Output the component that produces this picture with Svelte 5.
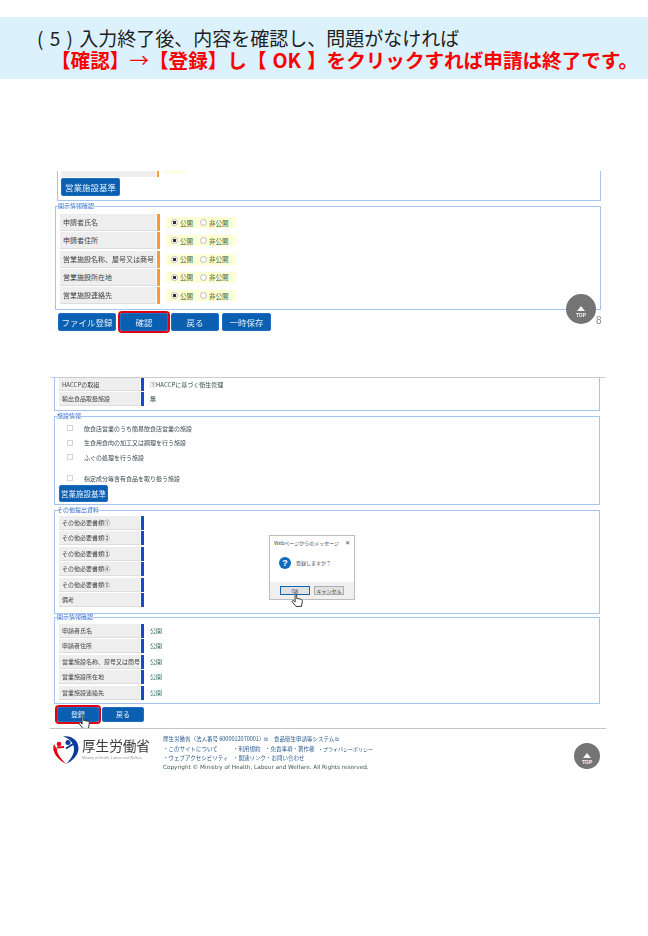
<script>
  const disclose = ["申請者氏名", "申請者住所", "営業施設名称、屋号又は商号", "営業施設所在地", "営業施設連絡先"];
  const others = ["その他必要書類①", "その他必要書類②", "その他必要書類③", "その他必要書類④", "その他必要書類⑤", "備考"];
  const facilities = [
    { text: "飲食店営業のうち簡易飲食店営業の施設", cls: "" },
    { text: "生食用食肉の加工又は調理を行う施設", cls: "" },
    { text: "ふぐの処理を行う施設", cls: "wide" },
    { text: "指定成分等含有食品を取り扱う施設", cls: "" }
  ];
  const handPath = "M5 1.500c1-.8 2 0 2 1V8l5 1c1.500.4 2 1 2 2.500L13 18H6L1.500 12.500c-.8-1.200.6-2.300 1.700-1.500L5 12.500z";
</script>

<div class="page">
  <header class="banner">
    <p class="line1">( 5 ) 入力終了後、内容を確認し、問題がなければ</p>
    <p class="line2">【確認】<span class="thin">→</span>【登録】し【 OK 】をクリックすれば申請は終了です。</p>
  </header>

  <section class="shot first">
    <div class="box top-box">
      <div class="stub"><span class="bar orange"></span><span class="tint"></span></div>
      <button class="btn big">営業施設基準</button>
    </div>
    <fieldset class="box open">
      <legend>開示情報確認</legend>
      {#each disclose as label}
        <div class="row">
          <span class="label">{label}</span>
          <span class="bar orange"></span>
          <span class="radios">
            <i class="radio on"></i><b>公開</b>
            <i class="radio"></i><b>非公開</b>
          </span>
        </div>
      {/each}
    </fieldset>
    <div class="actions">
      <button class="btn file">ファイル登録</button>
      <button class="btn confirm marked">確認</button>
      <button class="btn back">戻る</button>
      <button class="btn save">一時保存</button>
    </div>
    <div class="to-top main-top"><span class="arrow"></span><span>TOP</span></div>
    <span class="page-no">8</span>
  </section>

  <section class="shot second">
    <div class="box summary">
      <div class="row small"><span class="label">HACCPの取組</span><span class="bar blue"></span><span class="value">①HACCPに基づく衛生管理</span></div>
      <div class="row small"><span class="label">輸出食品取扱施設</span><span class="bar blue"></span><span class="value">無</span></div>
    </div>
    <fieldset class="box facilities">
      <legend>施設情報</legend>
      {#each facilities as f}
        <div class="check {f.cls}"><i></i><span>{f.text}</span></div>
      {/each}
      <button class="btn mid">営業施設基準</button>
    </fieldset>
    <fieldset class="box others">
      <legend>その他提出資料</legend>
      {#each others as label}
        <div class="row small"><span class="label">{label}</span><span class="bar blue"></span></div>
      {/each}
    </fieldset>
    <fieldset class="box confirmbox">
      <legend>開示情報確認</legend>
      {#each disclose as label}
        <div class="row small"><span class="label">{label}</span><span class="bar blue"></span><span class="value pub">公開</span></div>
      {/each}
    </fieldset>
    <div class="actions low">
      <button class="btn reg marked">登録</button>
      <button class="btn back2">戻る</button>
      <svg class="hand hand-reg" viewBox="0 0 16 20"><path d={handPath} fill="#fff" stroke="#333" stroke-width="1.200"/></svg>
    </div>

    <div class="dialog">
      <div class="dlg-title"><span>Webページからのメッセージ</span><span class="close">✕</span></div>
      <div class="dlg-body"><span class="ask">?</span><span>登録しますか？</span></div>
      <div class="dlg-foot">
        <span class="dlg-btn ok">OK</span>
        <span class="dlg-btn">キャンセル</span>
      </div>
      <svg class="hand hand-ok" viewBox="0 0 16 20"><path d={handPath} fill="#fff" stroke="#333" stroke-width="1.200"/></svg>
    </div>

    <footer class="foot">
      <div class="logo">
        <svg viewBox="0 0 28 30" width="28" height="30">
          <circle cx="7" cy="9" r="2.300" fill="#e60012"/>
          <path d="M2 9C-1 17 6 25 14 29C10 24 5 20 5 14C4.500 13 3 11 2 9z" fill="#e60012"/>
          <path d="M5 12.500L12 12" stroke="#e60012" stroke-width="2" fill="none"/>
          <circle cx="16" cy="7.500" r="2.500" fill="#0b3c9c"/>
          <path d="M11 1.500C20 0 27 6 26.500 14C26 21 20 26 14 29C19 24 22 19 22 14C22 8 17 3 11 1.500z" fill="#0b3c9c"/>
          <path d="M14 13.500L21 9" stroke="#0b3c9c" stroke-width="2" fill="none"/>
        </svg>
        <div class="logo-text">
          <span class="ja">厚生労働省</span>
          <span class="en">Ministry of Health, Labour and Welfare</span>
        </div>
      </div>
      <div class="foot-text">
        <p class="link">厚生労働省（法人番号 6000012070001）⧉　食品衛生申請等システム ⧉</p>
        <p class="link"><span class="c1">・このサイトについて</span><span class="c2">・利用規約</span><span class="c3">・免責事項・著作権</span><span class="c4">・プライバシーポリシー</span></p>
        <p class="link"><span class="c1">・ウェブアクセシビリティ</span><span class="c2">・関連リンク・お問い合わせ</span></p>
        <p class="copy">Copyright © Ministry of Health, Labour and Welfare. All Rights reserved.</p>
      </div>
      <div class="to-top foot-top"><span class="arrow"></span><span>TOP</span></div>
    </footer>
  </section>
</div>

<style>
  :global(body) {
    margin: 0;
    background: #fff;
  }
  .page {
    width: 648px;
    height: 936px;
    overflow: hidden;
    font-family: "Noto Sans CJK JP", "Noto Sans", sans-serif;
  }
  p { margin: 0; }

  .banner {
    margin-top: 17px;
    height: 62px;
    background: #dbf1fc;
    box-sizing: border-box;
    padding: 10px 0 0 37px;
  }
  .line1 {
    font-size: 19px;
    line-height: 22px;
    word-spacing: 2px;
    color: #222;
    white-space: nowrap;
  }
  .line2 {
    margin: 0 0 0 14px;
    font-size: 19.600px;
    line-height: 22px;
    word-spacing: 1.500px;
    font-weight: 700;
    color: #fb0000;
    white-space: nowrap;
  }
  .thin { font-weight: 400; }

  .shot {
    position: relative;
    filter: blur(.35px);
  }
  .first {
    margin: 92px 0 0 55px;
    width: 546px;
    height: 162px;
  }
  .second {
    margin: 44px 0 0 50px;
    width: 556px;
    border-top: 1px solid #ccc;
  }

  .box {
    margin: 0;
    padding: 0;
    min-width: 0;
    box-sizing: border-box;
    border: 1.500px solid #a4c3ef;
    background: #fff;
  }
  legend {
    margin-left: -2px;
    padding: 0;
    font-size: 6px;
    line-height: 6px;
    color: #2f6bd0;
    background: #fff;
  }
  .top-box {
    height: 30px;
    margin-left: 2px;
    border-top: 0;
    padding-left: 3px;
  }
  .stub {
    display: flex;
    height: 6px;
    width: 126px;
    background: linear-gradient(#eee, #eee) no-repeat 0 0 / 95px 100%;
    padding-left: 95px;
    box-sizing: border-box;
  }
  .tint { width: 28px; margin-left: 5px; background: #ffffdc; height: 2px; }
  .btn {
    display: block;
    border: 1px solid #1e6fc4;
    border-radius: 2px;
    background: #0a5fb0;
    color: #e4effa;
    font: 8.500px/1 "Noto Sans CJK JP", sans-serif;
    padding: 0;
    text-align: center;
    white-space: nowrap;
  }
  .btn.big { width: 59px; height: 18px; margin-top: 1px; }

  .open {
    margin-top: 2px;
    height: 107px;
    padding: 5px 0 0 4px;
  }
  .row {
    display: flex;
    height: 17px;
    margin-bottom: 1.300px;
    align-items: stretch;
  }
  .label {
    width: 96px;
    background: #eeeeee;
    border-bottom: 1px solid #ddd;
    box-sizing: border-box;
    padding-left: 3px;
    font-size: 7px;
    line-height: 16px;
    color: #444;
    white-space: nowrap;
    overflow: hidden;
  }
  .bar { width: 3px; margin-left: 1px; }
  .orange { background: #f79a3c; }
  .blue { background: #0d50c4; }
  .radios {
    margin: 3px 0 3px 6px;
    width: 70px;
    background: #ffffd6;
    display: flex;
    align-items: center;
    padding-left: 5px;
    box-sizing: border-box;
  }
  .radios b {
    font-weight: 400;
    font-size: 6.500px;
    color: #2d6640;
    margin-right: 7px;
    margin-left: 2px;
    white-space: nowrap;
  }
  .radio {
    border: 1px solid #bbb;
    border-radius: 50%;
    background: #fff;
    box-sizing: border-box;
    flex: none;
    width: 7px;
    height: 7px;
  }
  .radio.on { background: radial-gradient(circle, #333 0 1.500px, #fff 2px); }

  .actions {
    display: flex;
    gap: 3px;
    margin: 3px 0 0 3px;
    height: 18px;
    position: relative;
  }
  .file { width: 58px; margin-right: 1px; }
  .confirm { width: 48px; }
  .back { width: 48px; }
  .save { width: 49px; }
  .marked { outline: 2px solid #e00016; border-radius: 2px; }

  .to-top {
    position: absolute;
    border-radius: 50%;
    background: #747474;
    color: #f2f2f2;
    font: 700 5px/6px "Liberation Sans", sans-serif;
    display: flex;
    flex-direction: column;
    align-items: center;
    justify-content: flex-end;
    box-sizing: border-box;
  }
  .arrow {
    width: 0;
    height: 0;
    border-left: 4px solid transparent;
    border-right: 4px solid transparent;
    border-bottom: 5px solid #f4f4f4;
    margin-bottom: 1px;
  }
  .main-top {
    width: 30px;
    height: 30px;
    left: 511px;
    top: 123px;
    padding-bottom: 6px;
  }
  .page-no {
    position: absolute;
    left: 541px;
    top: 143px;
    font: 10px/14px "Liberation Sans", sans-serif;
    color: #8a8a8a;
  }

  .summary {
    height: 33px;
    margin: 0 0 0 4px;
    width: 546px;
    border-top: 0;
    padding-left: 4px;
  }
  .row.small {
    height: 14px;
    margin-bottom: 1.400px;
  }
  .summary .row.small:first-child { height: 13px; }
  .row.small .label {
    width: 81px;
    padding-left: 3px;
    font-size: 6px;
    line-height: 13px;
  }
  .value {
    font-size: 6px;
    line-height: 13px;
    color: #2e4e48;
    margin-left: 6px;
    white-space: nowrap;
  }
  .facilities {
    margin: 2px 0 0 4px;
    width: 546px;
    height: 92px;
    padding: 2px 0 0 4px;
  }
  .check {
    display: flex;
    align-items: center;
    height: 14.600px;
    padding-left: 8px;
    font-size: 6px;
    color: #3c4a50;
  }
  .check.wide { margin-bottom: 6px; }
  .check i {
    width: 6px;
    height: 6px;
    border: 1px solid #d4d4d4;
    margin-right: 11px;
    box-sizing: border-box;
  }
  .btn.mid { width: 49px; height: 17px; font-size: 7.500px; }
  .others {
    margin: 2px 0 0 4px;
    width: 546px;
    height: 107px;
    padding: 3px 0 0 4px;
  }
  .confirmbox {
    margin: 0 0 0 4px;
    width: 546px;
    height: 90px;
    padding: 4px 0 0 4px;
  }
  .pub { color: #2d6660; }
  .low {
    margin: 3px 0 0 7px;
    height: 15px;
  }
  .low .btn { font-size: 7px; }
  .reg { width: 42px; }
  .back2 { width: 42px; }

  .hand {
    position: absolute;
    width: 13px;
    height: 16px;
  }
  .hand-reg { left: 21px; top: 7px; }
  .hand-ok { left: 21px; top: 56px; }

  .dialog {
    position: absolute;
    left: 219px;
    top: 157px;
    width: 86px;
    height: 65px;
    box-sizing: border-box;
    border: 1px solid #bdbdbd;
    background: #fff;
    font-size: 5px;
    color: #444;
  }
  .dlg-title {
    display: flex;
    justify-content: space-between;
    padding: 3px 4px;
    line-height: 8px;
  }
  .close { font-size: 6px; }
  .dlg-body {
    display: flex;
    align-items: center;
    gap: 5px;
    height: 25px;
    padding-left: 9px;
  }
  .ask {
    width: 12px;
    height: 12px;
    border-radius: 50%;
    background: #0f6cbd;
    color: #fff;
    font: 700 9px/12px "Liberation Sans", sans-serif;
    text-align: center;
  }
  .dlg-foot {
    position: absolute;
    left: 0;
    right: 0;
    bottom: 0;
    height: 17px;
    background: #f0f0f0;
    display: flex;
    gap: 4px;
    justify-content: center;
    padding-top: 4px;
    box-sizing: border-box;
  }
  .dlg-btn {
    width: 30px;
    height: 9px;
    border: 1px solid #adadad;
    background: #e1e1e1;
    text-align: center;
    line-height: 8px;
    box-sizing: border-box;
  }
  .dlg-btn.ok { border: 1px solid #0a67b8; }

  .foot {
    position: relative;
    margin-top: 6px;
    border-top: 1px solid #c4c4c4;
    height: 50px;
    display: flex;
    padding: 6px 0 0 2px;
    box-sizing: border-box;
  }
  .logo {
    display: flex;
    width: 111px;
    height: 30px;
    gap: 2px;
    flex: none;
  }
  .logo-text { display: flex; flex-direction: column; }
  .ja {
    font-size: 13.600px;
    line-height: 19px;
    margin-top: 1px;
    color: #3a3a3a;
    white-space: nowrap;
  }
  .en {
    font: 3.500px/6px "Liberation Sans", sans-serif;
    color: #999;
    white-space: nowrap;
  }
  .foot-text { font-size: 5.500px; line-height: 9px; }
  .foot-text p { white-space: nowrap; }
  .link { color: #2b5a8c; }
  .c1 { display: inline-block; width: 70px; }
  .c2 { display: inline-block; width: 32px; }
  .c3 { display: inline-block; width: 53px; }
  .c4 { font-size: 5px; }
  .copy {
    font-family: "DejaVu Sans", sans-serif;
    font-size: 5.700px;
    color: #40584f;
  }
  .foot-top {
    width: 26px;
    height: 26px;
    left: 524px;
    top: 14px;
    padding-bottom: 4px;
  }
</style>
